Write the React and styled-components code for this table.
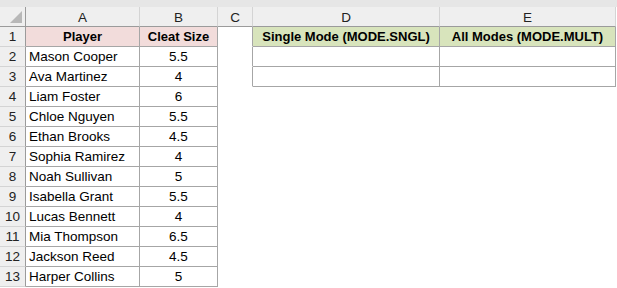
import React from 'react';
import styled, { createGlobalStyle } from 'styled-components';

const GlobalStyle = createGlobalStyle`
  html, body {
    margin: 0;
    padding: 0;
    background: #ffffff;
  }
  body {
    font-family: "Liberation Sans", Arial, sans-serif;
  }
`;

const GRID = '#a6a6a6';
const HEAD_LINE = '#d4d4d4';
const HEAD_EDGE = '#9b9b9b';
const HEAD_BG = '#efefef';

const players = [
  ['Mason Cooper', '5.5'],
  ['Ava Martinez', '4'],
  ['Liam Foster', '6'],
  ['Chloe Nguyen', '5.5'],
  ['Ethan Brooks', '4.5'],
  ['Sophia Ramirez', '4'],
  ['Noah Sullivan', '5'],
  ['Isabella Grant', '5.5'],
  ['Lucas Bennett', '4'],
  ['Mia Thompson', '6.5'],
  ['Jackson Reed', '4.5'],
  ['Harper Collins', '5'],
];

const Sheet = styled.div`
  display: grid;
  grid-template-columns: 26px 114px 78px 35px 187px 176px 1fr;
  grid-template-rows: 7px repeat(14, 20px);
  width: 617px;
  height: 288px;
  background: #ffffff;
  overflow: hidden;
`;

const TopStrip = styled.div`
  grid-column: 1 / -1;
  background: #e6e6e6;
`;

const Corner = styled.div`
  position: relative;
  background: ${HEAD_BG};
  border-right: 1px solid ${HEAD_EDGE};
  border-bottom: 1px solid ${HEAD_EDGE};
  box-sizing: border-box;
`;

const Triangle = styled.div`
  position: absolute;
  right: 3px;
  bottom: 3px;
  width: 0;
  height: 0;
  border-left: 12px solid transparent;
  border-bottom: 12px solid #b8b8b8;
`;

const ColHead = styled.div`
  background: ${HEAD_BG};
  border-right: 1px solid ${HEAD_LINE};
  border-bottom: 1px solid ${HEAD_EDGE};
  box-sizing: border-box;
  display: flex;
  align-items: center;
  justify-content: center;
  font-size: 13.5px;
  color: #222222;
  padding-top: 1px;
`;

const RowHead = styled.div`
  background: ${HEAD_BG};
  border-right: 1px solid ${HEAD_EDGE};
  border-bottom: 1px solid ${HEAD_LINE};
  box-sizing: border-box;
  display: flex;
  align-items: flex-end;
  justify-content: center;
  font-size: 13.5px;
  line-height: 18px;
  color: #222222;
`;

const Cell = styled.div`
  box-sizing: border-box;
  background: ${p => p.$bg || '#ffffff'};
  border-right: 1px solid ${p => (p.$right ? GRID : 'transparent')};
  border-bottom: 1px solid ${p => (p.$bottom ? GRID : 'transparent')};
  display: flex;
  align-items: flex-end;
  justify-content: ${p => (p.$center ? 'center' : 'flex-start')};
  padding: 0 3px;
  font-size: ${p => (p.$bold ? '13px' : '13.5px')};
  line-height: 18px;
  font-weight: ${p => (p.$bold ? 700 : 400)};
  color: #000000;
  white-space: nowrap;
  overflow: hidden;
`;

const Blank = styled.div``;

export default function App() {
  const rows = [
    {
      a: 'Player',
      b: 'Cleat Size',
      d: 'Single Mode (MODE.SNGL)',
      e: 'All Modes (MODE.MULT)',
      head: true,
    },
    ...players.map(([a, b]) => ({ a, b, d: '', e: '' })),
  ];

  return (
    <>
      <GlobalStyle />
      <Sheet>
        <TopStrip />
        <Corner>
          <Triangle />
        </Corner>
        {['A', 'B', 'C', 'D', 'E'].map(l => (
          <ColHead key={l}>{l}</ColHead>
        ))}
        <Blank />
        {rows.map((r, i) => {
          const n = i + 1;
          const inTable = n <= 3;
          return (
            <React.Fragment key={n}>
              <RowHead>{n}</RowHead>
              <Cell $right $bottom $bold={r.head} $center={r.head} $bg={r.head ? '#f2dcdb' : undefined}>
                {r.a}
              </Cell>
              <Cell $right $bottom $center $bold={r.head} $bg={r.head ? '#f2dcdb' : undefined}>
                {r.b}
              </Cell>
              <Cell $right={inTable} />
              <Cell $right={inTable} $bottom={inTable} $center $bold $bg={r.head ? '#d8e4bc' : undefined}>
                {inTable ? r.d : ''}
              </Cell>
              <Cell $right={inTable} $bottom={inTable} $center $bold $bg={r.head ? '#d8e4bc' : undefined}>
                {inTable ? r.e : ''}
              </Cell>
              <Blank />
            </React.Fragment>
          );
        })}
      </Sheet>
    </>
  );
}
